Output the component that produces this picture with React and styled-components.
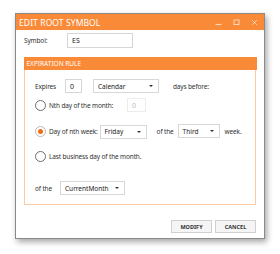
import styled, { createGlobalStyle } from "styled-components";

const orange = "#f98a37";

const GlobalStyle = createGlobalStyle`
	body {
		margin: 0;
		background: #ffffff;
		font-family: "Noto Sans", "Open Sans", sans-serif;
		color: #333;
	}
`;

const Page = styled.div`
	padding: 13px 15px;
`;

const Dialog = styled.div`
	width: 250px;
	height: 226px;
	box-sizing: border-box;
	border: 1px solid #8a8a8a;
	background: #fff;
	box-shadow: 2px 3px 6px rgba(0, 0, 0, 0.35);
	display: flex;
	flex-direction: column;
`;

const TitleBar = styled.div`
	height: 16px;
	background: ${orange};
	display: flex;
	align-items: center;
	padding: 0 6px 0 3px;
`;

const Title = styled.span`
	flex: 1;
	color: #fff;
	font-size: 8.5px;
	letter-spacing: 0.1px;
`;

const Controls = styled.div`
	display: flex;
	gap: 11px;
	align-items: center;
`;

const Body = styled.div`
	flex: 1;
	display: flex;
	flex-direction: column;
	padding: 3px 8px 5px 8px;
`;

const Row = styled.div`
	display: flex;
	align-items: center;
	height: ${(p) => p.$h || 14}px;
	margin-top: ${(p) => p.$mt || 0}px;
`;

const Label = styled.span`
	flex-shrink: 0;
	font-size: 6.5px;
	letter-spacing: -0.15px;
	color: #333;
	width: ${(p) => (p.$w ? `${p.$w}px` : "auto")};
	margin-left: ${(p) => p.$ml || 0}px;
	white-space: nowrap;
`;

const TextBox = styled.div`
	flex-shrink: 0;
	box-sizing: border-box;
	width: ${(p) => p.$w}px;
	height: ${(p) => p.$h || 14}px;
	border: 1px solid ${(p) => (p.$disabled ? "#ececec" : "#d6d6d6")};
	font-size: 7px;
	color: ${(p) => (p.$disabled ? "#bbb" : "#222")};
	display: flex;
	align-items: center;
	padding-left: 4px;
	margin-left: ${(p) => p.$ml || 0}px;
`;

const Select = styled.div`
	flex-shrink: 0;
	box-sizing: border-box;
	width: ${(p) => p.$w}px;
	height: ${(p) => p.$h || 14}px;
	border: 1px solid #d8d8d8;
	background: #fff;
	font-size: 6.5px;
	color: #222;
	display: flex;
	align-items: center;
	justify-content: space-between;
	padding: 0 5px 0 4px;
	margin-left: ${(p) => p.$ml || 0}px;
	align-self: ${(p) => p.$self || "center"};
`;

const Caret = styled.span`
	width: 0;
	height: 0;
	border-left: 2px solid transparent;
	border-right: 2px solid transparent;
	border-top: 2.5px solid #333;
`;

const Group = styled.div`
	margin-top: 9px;
	border: 1.5px solid #fdcaa6;
	border-top: none;
	height: 148px;
	box-sizing: border-box;
	display: flex;
	flex-direction: column;
`;

const GroupHeader = styled.div`
	height: 13px;
	background: ${orange};
	color: #fff;
	font-size: 6.5px;
	display: flex;
	align-items: center;
	padding-left: 3px;
	margin: 0 -1.5px;
`;

const GroupBody = styled.div`
	display: flex;
	flex-direction: column;
	padding: 0 10px;
`;

const Radio = styled.span`
	flex-shrink: 0;
	box-sizing: border-box;
	width: 11px;
	height: 11px;
	border-radius: 50%;
	border: 1px solid ${(p) => (p.$checked ? "#b9b9b9" : "#6d6d6d")};
	display: flex;
	align-items: center;
	justify-content: center;
	margin-right: 3px;

	&::after {
		content: "";
		width: 5px;
		height: 5px;
		border-radius: 50%;
		background: ${(p) => (p.$checked ? "#f26d12" : "transparent")};
	}
`;

const Footer = styled.div`
	margin-top: auto;
	display: flex;
	justify-content: flex-end;
	gap: 3px;
`;

const Button = styled.div`
	box-sizing: border-box;
	width: 41px;
	height: 13px;
	border: 1px solid #d0d0d0;
	background: #f5f5f5;
	font-size: 5.5px;
	font-weight: 700;
	color: #333;
	display: flex;
	align-items: center;
	justify-content: center;
`;

function WinIcon({ kind }) {
	const stroke = "rgba(255,255,255,0.65)";
	return (
		<svg width="7" height="7" viewBox="0 0 7 7">
			{kind === "min" && <line x1="0.5" y1="5.5" x2="6.5" y2="5.5" stroke={stroke} strokeWidth="1.2" />}
			{kind === "max" && <rect x="1" y="1" width="5" height="4.5" fill="none" stroke={stroke} strokeWidth="1" />}
			{kind === "close" && (
				<path d="M1.2 1.2 L5.8 5.8 M5.8 1.2 L1.2 5.8" stroke={stroke} strokeWidth="0.9" />
			)}
		</svg>
	);
}

export default function App() {
	return (
		<>
			<GlobalStyle />
			<Page>
				<Dialog>
					<TitleBar>
						<Title>EDIT ROOT SYMBOL</Title>
						<Controls>
							<WinIcon kind="min" />
							<WinIcon kind="max" />
							<WinIcon kind="close" />
						</Controls>
					</TitleBar>
					<Body>
						<Row $h={15}>
							<Label $w={43}>Symbol:</Label>
							<TextBox $w={66} $h={15}>ES</TextBox>
						</Row>
						<Group>
							<GroupHeader>EXPIRATION RULE</GroupHeader>
							<GroupBody>
								<Row $mt={9}>
									<Label $w={30}>Expires</Label>
									<TextBox $w={17}>0</TextBox>
									<Select $w={66} $ml={11}>
										Calendar
										<Caret />
									</Select>
									<Label $ml={14}>days before:</Label>
								</Row>
								<Row $mt={5}>
									<Radio />
									<Label $w={78}>Nth day of the month:</Label>
									<TextBox $w={19} $disabled>
										0
									</TextBox>
								</Row>
								<Row $mt={12} $h={15}>
									<Radio $checked />
									<Label>Day of nth week:</Label>
									<Select $w={47} $ml={2}>
										Friday
										<Caret />
									</Select>
									<Label $ml={10} $w={21}>
										of the
									</Label>
									<Select $w={42} $self="flex-start">
										Third
										<Caret />
									</Select>
									<Label $ml={5}>week.</Label>
								</Row>
								<Row $mt={10}>
									<Radio />
									<Label>Last business day of the month.</Label>
								</Row>
								<Row $mt={18}>
									<Label $w={25}>of the</Label>
									<Select $w={65}>
										CurrentMonth
										<Caret />
									</Select>
								</Row>
							</GroupBody>
						</Group>
						<Footer>
							<Button>MODIFY</Button>
							<Button>CANCEL</Button>
						</Footer>
					</Body>
				</Dialog>
			</Page>
		</>
	);
}
